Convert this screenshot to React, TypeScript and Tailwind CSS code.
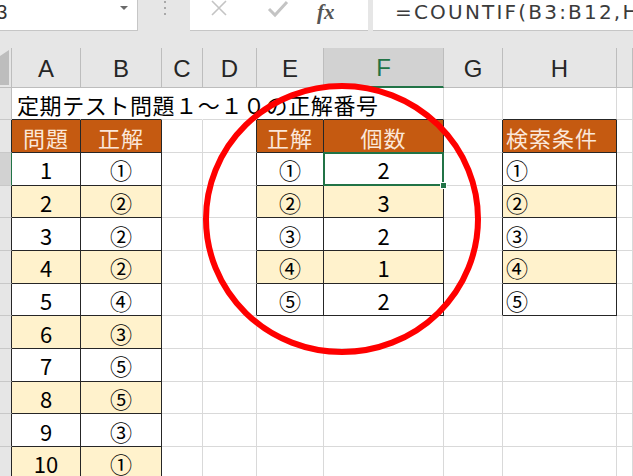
import React from "react";

type Col = { key: string; w: number };

const COLS: Col[] = [
  { key: "#", w: 12 },
  { key: "A", w: 69 },
  { key: "B", w: 81 },
  { key: "C", w: 41 },
  { key: "D", w: 54 },
  { key: "E", w: 67 },
  { key: "F", w: 120 },
  { key: "G", w: 59 },
  { key: "H", w: 114 },
  { key: "I", w: 16 },
];

const ROWS = [1, 2, 3, 4, 5, 6, 7, 8, 9, 10, 11, 12];

const answers = ["①", "②", "②", "②", "④", "③", "⑤", "⑤", "③", "①"];
const marks = ["①", "②", "③", "④", "⑤"];
const counts = ["2", "3", "2", "1", "2"];

type Cell = { text: string; head?: boolean; left?: boolean };

const cells: Record<string, Cell> = {
  A2: { text: "問題", head: true },
  B2: { text: "正解", head: true },
  E2: { text: "正解", head: true },
  F2: { text: "個数", head: true },
  H2: { text: "検索条件", head: true, left: true },
};
answers.forEach((a, i) => {
  cells[`A${i + 3}`] = { text: String(i + 1) };
  cells[`B${i + 3}`] = { text: a };
});
marks.forEach((m, i) => {
  cells[`E${i + 3}`] = { text: m };
  cells[`F${i + 3}`] = { text: counts[i] };
  cells[`H${i + 3}`] = { text: m, left: true };
});

function inTable(c: string, r: number) {
  if ((c === "A" || c === "B") && r >= 2 && r <= 12) return true;
  if ((c === "E" || c === "F") && r >= 2 && r <= 7) return true;
  if (c === "H" && r >= 2 && r <= 7) return true;
  return false;
}

function SheetCell({ ci, r }: { ci: number; r: number }) {
  const c = COLS[ci].key;
  const next = COLS[ci + 1]?.key ?? "";
  const cell = cells[`${c}${r}`];
  const table = inTable(c, r);

  const darkRight = table || inTable(next, r);
  const darkBottom = table || inTable(c, r + 1);
  // text of A1 runs over B1..F1, so Excel drops those gridlines
  const overflow = r === 1 && ["A", "B", "C", "D", "E"].includes(c);

  const right = darkRight
    ? "border-r-[#262626]"
    : overflow
      ? "border-r-white"
      : "border-r-[#d9d9d9]";
  const bottom = darkBottom ? "border-b-[#262626]" : "border-b-[#d9d9d9]";

  let bg = "bg-white";
  if (cell?.head) bg = "bg-[#c55a11]";
  else if (table && r % 2 === 0) bg = "bg-[#fff2cc]";

  const selected = c === "F" && r === 3;

  return (
    <div className={`relative flex items-center border-r border-b ${right} ${bottom} ${bg}`}>
      {r === 1 && c === "A" && (
        <span className="relative z-10 whitespace-nowrap pl-[5px] pt-[2px] text-[22px] tracking-[0.6px] text-black">
          定期テスト問題１～１０の正解番号
        </span>
      )}
      {cell && (
        <span
          className={`w-full pt-[2px] text-[22px] ${cell.left ? "pl-[3px] text-left" : "text-center"} ${
            cell.head ? "tracking-[1px] text-[#fbe7d9]" : "text-black"
          }`}
        >
          {cell.text}
        </span>
      )}
      {selected && (
        <>
          <div className="absolute -top-px -left-px -right-px -bottom-px z-10 border-2 border-[#217346]" />
          <div className="absolute -right-[4px] -bottom-[4px] z-20 h-[7px] w-[7px] border border-white bg-[#217346]" />
        </>
      )}
    </div>
  );
}

function RowHeader({ r }: { r: number }) {
  let right = "border-r-[#bdbdbd]";
  if (r === 3) right = "border-r-[#217346]";
  else if (r >= 2) right = "border-r-[#262626]";
  return (
    <div
      className={`border-b border-b-[#c8c8c8] border-r ${right} ${r === 3 ? "bg-[#d2d2d2]" : "bg-[#e6e6e6]"}`}
    />
  );
}

function FormulaBar() {
  return (
    <div className="flex h-[31px] bg-[#e6e6e6]">
      <div className="flex w-[138px] items-start justify-between overflow-hidden border-r border-b border-[#c6c6c6] bg-white">
        <span className="-ml-[16px] pt-[1px] font-['Liberation_Sans',sans-serif] text-[20px] leading-[22px] text-[#333]">
          F3
        </span>
        <svg width="8" height="5" viewBox="0 0 8 5" className="mt-[6px] mr-[9px]">
          <polygon points="0,0 8,0 4,4" fill="#6a6a6a" />
        </svg>
      </div>
      <div className="flex w-[52px] justify-center pl-[1px]">
        <div className="flex flex-col gap-[4px] pt-[1px]">
          <div className="h-[2px] w-[2px] bg-[#a8a8a8]" />
          <div className="h-[2px] w-[2px] bg-[#a8a8a8]" />
          <div className="h-[2px] w-[2px] bg-[#a8a8a8]" />
        </div>
      </div>
      <div className="flex w-[178px] items-start border-b border-[#c6c6c6] bg-white">
        <svg width="18" height="18" viewBox="0 0 18 18" className="mt-[-1px] ml-[20px]">
          <path d="M2 2 L16 16 M16 2 L2 16" stroke="#c4c4c4" strokeWidth="1.6" />
        </svg>
        <svg width="22" height="18" viewBox="0 0 22 18" className="mt-[0px] ml-[39px]">
          <path d="M2 9 L8 15 L20 2" stroke="#c4c4c4" strokeWidth="3" fill="none" />
        </svg>
        <span className="ml-[28px] pt-[1px] font-['Liberation_Serif',serif] text-[21px] leading-[22px] font-bold italic text-[#555]">
          fx
        </span>
      </div>
      <div className="w-[5px]" />
      <div className="flex flex-1 items-start overflow-hidden border-b border-[#c6c6c6] bg-white">
        <span className="ml-[22px] pt-[1px] whitespace-nowrap font-['DejaVu_Sans',sans-serif] text-[20px] leading-[22px] tracking-[2.2px] text-[#3b3b3b]">
          =COUNTIF(B3:B12,H3:H7)
        </span>
      </div>
    </div>
  );
}

export default function App() {
  return (
    <div className="relative h-[476px] w-[633px] overflow-hidden bg-[#e6e6e6] font-['Noto_Sans_CJK_JP',sans-serif]">
      <FormulaBar />
      <div className="h-[17px]" />
      <div className="grid grid-cols-[12px_69px_81px_41px_54px_67px_120px_59px_114px_16px] grid-rows-[39.5px_repeat(12,32.7px)]">
        {COLS.map((col) =>
          col.key === "#" ? (
            <div key="corner" className="relative border-r border-b border-[#bdbdbd] bg-[#e6e6e6]">
              <svg width="10" height="39" viewBox="0 0 10 39" className="mt-[1px]">
                <polygon points="0,7 9,1 9,36 0,36" fill="#bdbdbd" />
              </svg>
            </div>
          ) : (
            <div
              key={col.key}
              className={`flex items-center justify-center border-r border-r-[#bdbdbd] pt-[3px] font-['Liberation_Sans',sans-serif] text-[24px] ${
                col.key === "F"
                  ? "border-b-2 border-b-[#217346] bg-[#d2d2d2] text-[#217346]"
                  : "border-b border-b-[#bdbdbd] text-[#262626]"
              }`}
            >
              {col.key === "I" ? "" : col.key}
            </div>
          )
        )}
        {ROWS.map((r) =>
          COLS.map((col, ci) =>
            ci === 0 ? <RowHeader key={`h${r}`} r={r} /> : <SheetCell key={`${col.key}${r}`} ci={ci} r={r} />
          )
        )}
      </div>
      <svg
        width="633"
        height="476"
        viewBox="0 0 633 476"
        className="pointer-events-none absolute top-0 left-0 z-30"
      >
        <ellipse cx="342" cy="219" rx="136" ry="133" fill="none" stroke="#ff0000" strokeWidth="6" />
      </svg>
    </div>
  );
}
